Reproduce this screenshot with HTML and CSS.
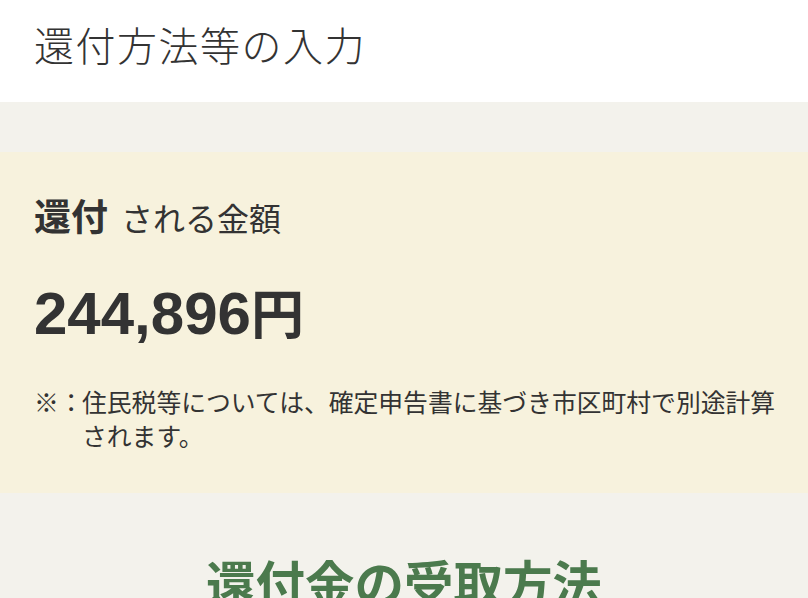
FILE: index.html
```html
<!DOCTYPE html>
<html lang="ja">
<head>
<meta charset="utf-8">
<title>還付方法等の入力</title>
<link rel="stylesheet" href="styles.css">
</head>
<body>
<header class="top">
  <h1 class="title">還付方法等の入力</h1>
</header>
<main class="content">
  <section class="refund">
    <h2 class="refund-label"><span class="strong">還付</span><span class="sub">される金額</span></h2>
    <p class="amount">244,896<span class="yen">円</span></p>
    <p class="note"><span class="mark">※：</span>住民税等については、確定申告書に基づき市区町村で別途計算されます。</p>
  </section>
  <h2 class="section-title">還付金の受取方法</h2>
</main>
</body>
</html>
```
FILE: styles.css
```css
* { box-sizing: border-box; }
html, body { margin: 0; padding: 0; }
body {
  width: 808px;
  height: 598px;
  overflow: hidden;
  background: #f3f2ec;
  color: #333333;
  font-family: "Noto Sans CJK JP", "Noto Sans", sans-serif;
}
.top {
  background: #ffffff;
  height: 102px;
  padding: 14px 34px 0;
}
.title {
  margin: 0;
  font-size: 40px;
  line-height: 60px;
  font-weight: 300;
  letter-spacing: 1.5px;
  color: #333333;
}
.content {
  padding-top: 50px;
}
.refund {
  background: #f7f2dd;
  height: 341px;
  padding: 40px 22px 0 34px;
}
.refund-label {
  margin: 0;
  line-height: 46px;
  display: flex;
  align-items: baseline;
  gap: 13px;
}
.strong {
  font-size: 37px;
  font-weight: 700;
}
.sub {
  font-size: 32px;
  font-weight: 400;
}
.amount {
  margin: 38px 0 0;
  font-family: "Liberation Sans", "Noto Sans CJK JP", sans-serif;
  font-size: 60px;
  font-weight: 700;
  line-height: 66px;
}
.yen {
  font-family: "Noto Sans CJK JP", sans-serif;
  font-size: 53px;
}
.note {
  margin: 37px 0 0;
  font-size: 24.8px;
  line-height: 34px;
  padding-left: 48px;
  text-indent: -48px;
}
.mark {
  display: inline-block;
  width: 48px;
  text-indent: 0;
}
.section-title {
  margin: 54px 0 0;
  text-align: center;
  font-size: 49.5px;
  line-height: 70px;
  font-weight: 700;
  color: #4b7a4d;
}
```
